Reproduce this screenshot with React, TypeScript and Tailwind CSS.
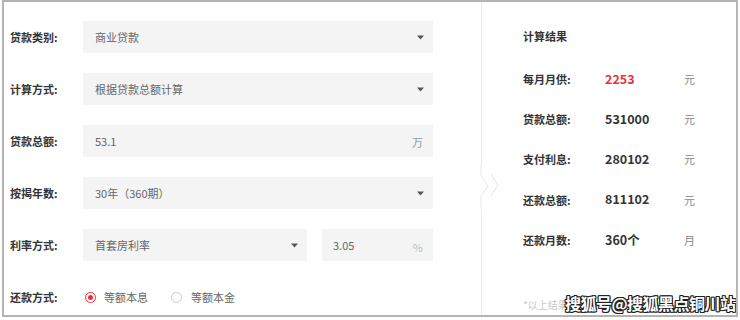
import React from "react";

const font = { fontFamily: '"Noto Sans CJK SC", "Noto Sans", sans-serif' };

function Arrow() {
  return (
    <svg width="7" height="5" viewBox="0 0 7 5" className="shrink-0">
      <path d="M0 0.5 H7 L3.5 4.5 Z" fill="#555" />
    </svg>
  );
}

function Label({ children }: { children: React.ReactNode }) {
  return <div className="w-[73px] shrink-0 text-[11px] font-bold text-[#333]">{children}</div>;
}

function SelectBox({ text, w }: { text: string; w: string }) {
  return (
    <div className={`${w} h-[32px] bg-[#f4f4f4] flex items-center justify-between pl-[12px] pr-[9px]`}>
      <span className="text-[11px] text-[#666]">{text}</span>
      <Arrow />
    </div>
  );
}

function ResultRow({ label, value, unit, red }: { label: string; value: string; unit: string; red?: boolean }) {
  return (
    <div className="flex items-center h-[20px]">
      <div className="w-[82px] text-[11px] font-bold text-[#333]">{label}</div>
      <div className={`w-[79px] text-[12.5px] font-bold ${red ? "text-[#e8323c]" : "text-[#333]"}`}>{value}</div>
      <div className="text-[11px] text-[#888]">{unit}</div>
    </div>
  );
}

export default function App() {
  return (
    <div className="w-[740px] h-[320px] bg-white pl-[2px]" style={font}>
      <div className="relative w-[736px] h-[317px] overflow-hidden border-2 border-[#b4b4b4] bg-white flex">
        {/* left panel */}
        <div className="w-[477px] shrink-0 pl-[6px] pt-[19px] flex flex-col gap-[20px]">
          <div className="flex items-center">
            <Label>贷款类别:</Label>
            <SelectBox text="商业贷款" w="w-[350px]" />
          </div>
          <div className="flex items-center">
            <Label>计算方式:</Label>
            <SelectBox text="根据贷款总额计算" w="w-[350px]" />
          </div>
          <div className="flex items-center">
            <Label>贷款总额:</Label>
            <div className="w-[350px] h-[32px] bg-[#f4f4f4] flex items-center justify-between pl-[12px] pr-[10px]">
              <span className="text-[11px] text-[#666]">53.1</span>
              <span className="text-[11px] text-[#999] mt-[3px]">万</span>
            </div>
          </div>
          <div className="flex items-center">
            <Label>按揭年数:</Label>
            <SelectBox text="30年（360期）" w="w-[350px]" />
          </div>
          <div className="flex items-center">
            <Label>利率方式:</Label>
            <SelectBox text="首套房利率" w="w-[224px]" />
            <div className="ml-[15px] w-[111px] h-[32px] bg-[#f4f4f4] flex items-center justify-between pl-[11px] pr-[10px]">
              <span className="text-[11px] text-[#666]">3.05</span>
              <span className="text-[11px] text-[#bbb] mt-[4px]">%</span>
            </div>
          </div>
          <div className="flex items-center h-[32px]">
            <Label>还款方式:</Label>
            <div className="flex items-center ml-[2px]">
              <div className="w-[11px] h-[11px] rounded-full border border-[#e8323c] flex items-center justify-center">
                <div className="w-[5px] h-[5px] rounded-full bg-[#e8323c]" />
              </div>
              <span className="ml-[8px] text-[11px] text-[#666]">等额本息</span>
              <div className="ml-[23px] w-[11px] h-[11px] rounded-full border border-[#ccc]" />
              <span className="ml-[9px] text-[11px] text-[#666]">等额本金</span>
            </div>
          </div>
        </div>
        {/* divider */}
        <div className="w-[1px] shrink-0 bg-[#ececec]" />
        {/* right panel */}
        <div className="flex-1 pl-[41px] pt-[24px] flex flex-col">
          <div className="text-[11px] font-bold text-[#333] h-[20px] flex items-center">计算结果</div>
          <div className="mt-[23px] flex flex-col gap-[20.25px]">
            <ResultRow label="每月月供:" value="2253" unit="元" red />
            <ResultRow label="贷款总额:" value="531000" unit="元" />
            <ResultRow label="支付利息:" value="280102" unit="元" />
            <ResultRow label="还款总额:" value="811102" unit="元" />
            <ResultRow label="还款月数:" value="360个" unit="月" />
          </div>
          <div className="mt-[47px] text-[10px] text-[#c8c8c8] whitespace-nowrap">*以上结果仅供参考</div>
        </div>
        {/* chevron on divider */}
        <svg className="absolute left-[470px] top-[163px]" width="30" height="44" viewBox="0 0 30 44">
          <rect x="6" y="0" width="10" height="44" fill="#fff" />
          <path d="M7 0 V11 L14 21 L7 31 V44" fill="none" stroke="#e6e6e6" strokeWidth="1" />
          <path d="M17 9 L24 20 L17 31" fill="none" stroke="#eeeeee" strokeWidth="1.5" />
        </svg>
        {/* watermark */}
        <div
          className="absolute left-[561px] top-[289px] whitespace-nowrap text-[16px] font-bold text-white tracking-[-0.5px] [text-shadow:1px_0_0_#222,-1px_0_0_#222,0_1px_0_#222,0_-1px_0_#222,1px_1px_0_#222,-1px_-1px_0_#222,1px_-1px_0_#222,-1px_1px_0_#222]"
        >
          搜狐号@搜狐黑点铜川站
        </div>
      </div>
    </div>
  );
}
